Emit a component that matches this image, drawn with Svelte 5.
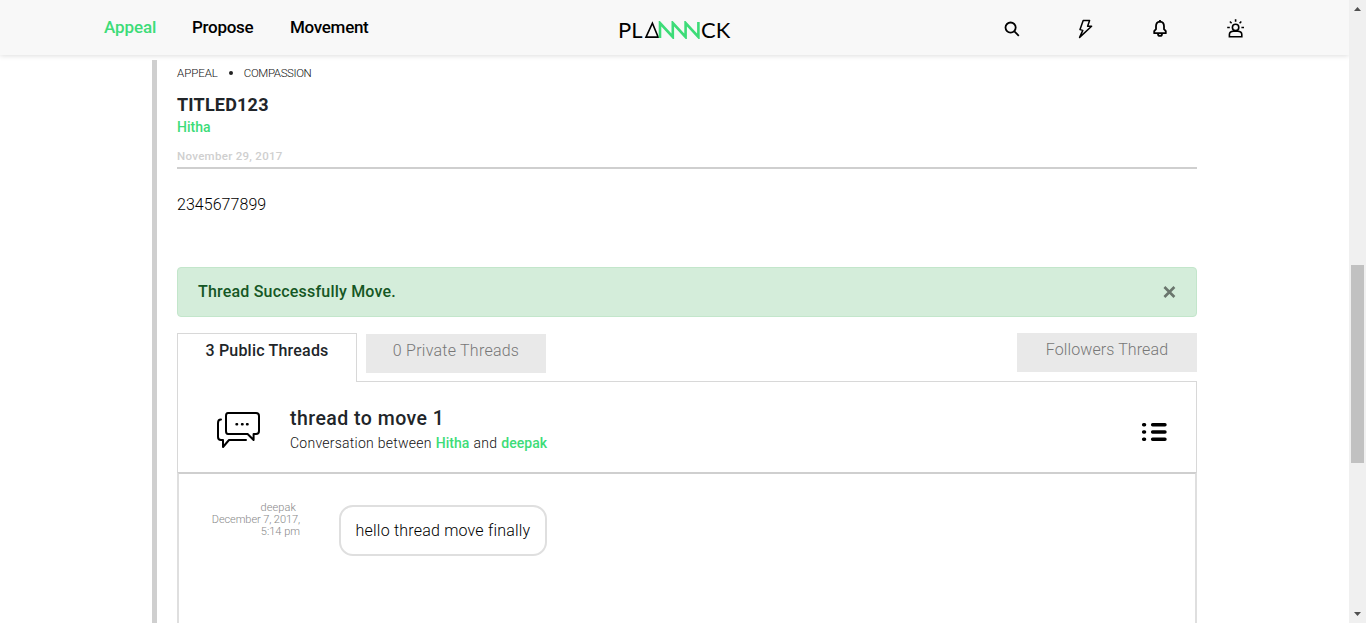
<script>
  const nav = [
    { label: 'Appeal', cls: 'appeal' },
    { label: 'Propose', cls: 'propose' },
    { label: 'Movement', cls: 'movement' }
  ];
</script>

<div class="window">
  <div class="page">
    <header>
      <nav>
        {#each nav as item}
          <a class={item.cls}>{item.label}</a>
        {/each}
      </nav>
      <div class="logo">
        <span class="pl">PL</span>
        <svg width="56" height="18" viewBox="0 0 56 18" fill="none">
          <path d="M2 16.1 8.4 2.2 14.2 16.1Z" stroke="#000" stroke-width="1.6" />
          <path d="M16 17V2L28.8 16V2L41.6 16V2L54.4 16V1" stroke="#3ddc78" stroke-width="2.6" />
        </svg>
        <span class="ck">CK</span>
      </div>
      <div class="icons">
        <svg width="16" height="16" viewBox="0 0 16 16" fill="none" stroke="#000" stroke-width="1.8">
          <circle cx="6.6" cy="6.6" r="5.1" /><path d="M10.4 10.4 14.8 14.8" />
        </svg>
        <svg width="16" height="20" viewBox="0 0 16 20" fill="none" stroke="#000" stroke-width="1.5" stroke-linejoin="round">
          <path d="M5.2 1.4H11.6L9.6 7.2H13.6L1.6 18.4 4.8 11.4 2 10.6Z" />
        </svg>
        <svg class="bell" width="16" height="18" viewBox="0 0 16 18" fill="none" stroke="#000" stroke-width="1.8" stroke-linejoin="round">
          <path d="M8 1.6C5.2 1.8 4 3.8 4 6.2V9.2L2.2 11.2V13.2H13.8V11.2L12 9.2V6.2C12 3.8 10.8 1.8 8 1.6Z" />
          <path d="M6 14C6 16.6 10 16.6 10 14M8 0V2" />
        </svg>
        <svg class="user" width="18" height="20" viewBox="0 0 18 20" fill="none" stroke="#000" stroke-width="1.6">
          <circle cx="8.6" cy="8.4" r="3.2" />
          <path d="M2.4 17.8V15.6C2.4 13.2 4.1 12.3 6.6 12.3H10.6C13.1 12.3 14.8 13.2 14.8 15.6V17.8Z" />
          <path d="M8.6 .2V2.8M2.9 2.5 4.6 4.2M14.3 2.5 12.6 4.2M.2 8.5H2.8M14.4 8.5H17" />
        </svg>
      </div>
    </header>

    <main>
      <div class="crumbs"><span class="c1">APPEAL</span><i></i><span class="c2">COMPASSION</span></div>
      <h1>TITLED123</h1>
      <div class="author">Hitha</div>
      <div class="date">November 29, 2017</div>
      <p class="body">2345677899</p>

      <div class="alert">
        <strong>Thread Successfully Move.</strong>
        <svg width="14" height="14" viewBox="0 0 14 14" stroke="#6a766d" stroke-width="2.6"><path d="M2.4 2 12.4 12M12.4 2 2.4 12" /></svg>
      </div>

      <div class="tabs">
        <div class="tab active">3 Public Threads</div>
        <div class="tab private">0 Private Threads</div>
        <div class="tab followers">Followers Thread</div>
      </div>

      <section class="thread">
        <svg class="chat" width="46" height="38" viewBox="0 0 46 38" fill="none" stroke="#000" stroke-width="2" stroke-linejoin="round" stroke-linecap="round">
          <path d="M12 2H40Q43 2 43 5V20Q43 23 40 23H37.6V29L31.6 23H12Q10 23 10 20V5Q10 2 12 2Z" />
          <path d="M5 8.6Q2 8.6 2 12V26Q2 29 5 29H7V36L13 29H30" />
          <path d="M20.5 13.2H21.1M26 13.2H26.6M31 13.2H31.6" stroke-width="2.4" />
        </svg>
        <div class="info">
          <h2>thread to move 1</h2>
          <div class="between"><span>Conversation between</span><b>Hitha</b><span>and</span><b>deepak</b></div>
        </div>
        <svg class="list" width="26" height="20" viewBox="0 0 26 20" stroke="#000" stroke-width="3.4" stroke-linecap="round">
          <path d="M2.6 2.8H3.6M2.6 10H3.6M2.6 17.2H3.6M11.6 2.8H24M11.6 10H24M11.6 17.2H24" />
        </svg>
      </section>

      <section class="messages">
        <div class="meta">
          <div class="who">deepak</div>
          <div class="when">December 7, 2017,</div>
          <div class="time">5:14 pm</div>
        </div>
        <div class="bubble">hello thread move finally</div>
      </section>
    </main>
  </div>

  <div class="scroll">
    <svg width="7" height="4" viewBox="0 0 7 4"><path d="M0 4 3.5 0 7 4Z" fill="#505050" /></svg>
    <div class="thumb"></div>
    <svg width="7" height="4" viewBox="0 0 7 4"><path d="M0 0 3.5 4 7 0Z" fill="#505050" /></svg>
  </div>
</div>

<style>
  :global(body) { margin: 0; overflow: hidden; background: #fff; }
  * { box-sizing: border-box; }
  .window { display: flex; width: 1366px; height: 623px; overflow: hidden; font-family: Roboto, "Noto Sans", sans-serif; font-weight: 300; color: #111; white-space: nowrap; }
  .page { width: 1349px; display: flex; flex-direction: column; gap: 5px; }
  header { height: 55px; flex: none; display: grid; grid-template-columns: 618px 386px 1fr; background: #f8f8f8; box-shadow: 0 1px 5px rgba(0, 0, 0, .13); }
  nav { display: flex; padding-left: 104px; line-height: 54px; font-size: 17px; font-weight: 500; letter-spacing: -.3px; color: #000; }
  .appeal { width: 88px; letter-spacing: -.1px; color: #3ddc78; }
  .propose { width: 98px; }
  .logo { display: flex; height: 18px; margin-top: 21px; line-height: 18px; font-family: Lato, sans-serif; font-weight: 400; font-size: 22px; color: #000; }
  .pl { width: 26px; }
  .ck { width: 32px; padding-left: 1px; }
  .icons { display: flex; align-items: center; gap: 58px; padding-top: 2px; }
  .bell { margin-top: 1px; }
  .user { margin-left: 1px; }
  main { flex: 1; margin-left: 152px; width: 1045px; border-left: 5px solid #cfcfcf; padding-left: 20px; }
  .crumbs { display: flex; align-items: center; height: 26px; font-size: 11.5px; }
  .crumbs i { width: 4px; height: 4px; border-radius: 50%; background: #222; margin: 0 11px; }
  .c1 { letter-spacing: -.05px; }
  .c2 { letter-spacing: -.38px; }
  h1 { margin: 0; height: 37px; line-height: 38px; font-size: 18px; font-weight: 700; letter-spacing: .2px; color: #212529; }
  .author { height: 10px; line-height: 9px; font-size: 14px; font-weight: 500; color: #3ddc78; }
  .date { height: 36px; line-height: 46px; border-bottom: 2px solid #cfcfcf; font-size: 11.5px; font-weight: 500; letter-spacing: .3px; color: #cfcfcf; }
  .body { margin: 0; height: 98px; line-height: 72px; font-size: 16px; letter-spacing: .05px; color: #000; }
  .alert { display: flex; align-items: center; justify-content: space-between; height: 50px; padding: 0 20px; border: 1px solid #c3e6cb; border-radius: 4px; background: #d4edda; color: #155724; font-size: 16px; }
  .alert strong { font-weight: 500; letter-spacing: .2px; padding-bottom: 2px; }
  .tabs { display: flex; height: 48px; margin-top: 16px; }
  .tab { width: 180px; height: 39px; text-align: center; line-height: 34px; font-size: 16px; background: #e9e9e9; color: #777; }
  .active { height: 48px; background: #fff; border: 1px solid #d8d8d8; border-bottom: 0; color: #212529; font-weight: 500; letter-spacing: .2px; }
  .private { margin: 1px 0 0 9px; letter-spacing: .25px; }
  .followers { margin-left: auto; letter-spacing: .1px; }
  .thread { display: flex; height: 91px; border: solid #d8d8d8; border-width: 0 1px; padding: 28px 29px 0 38px; background: linear-gradient(#d8d8d8, #d8d8d8) 178px 0 / 840px 1px no-repeat; }
  .chat { margin-top: 2px; }
  .info { margin-left: 28px; flex: 1; }
  h2 { margin: 0; height: 23px; line-height: 20px; font-size: 19.5px; font-weight: 500; letter-spacing: .47px; color: #212529; }
  .between { display: flex; gap: 4px; line-height: 23px; font-size: 14px; letter-spacing: .25px; }
  b { font-weight: 500; letter-spacing: .05px; color: #3ddc78; }
  .list { margin-top: 13px; }
  .messages { display: flex; height: 160px; border: 2px solid #dfdfdf; border-top-color: #cfcfcf; padding: 28px 0 0 32px; }
  .meta { width: 89px; font-size: 11px; line-height: 12px; color: #888; text-align: right; }
  .who { padding-right: 4px; letter-spacing: .1px; }
  .when { letter-spacing: -.08px; }
  .bubble { width: 208px; height: 51px; margin: 3px 0 0 39px; border: 2px solid #dfdfdf; border-radius: 14px; line-height: 48px; text-align: center; font-size: 16px; letter-spacing: .2px; color: #000; }
  .scroll { width: 17px; background: #f0f0f0; display: flex; flex-direction: column; align-items: center; padding: 7px 0; }
  .thumb { width: 13px; height: 198px; margin: 254px 0 149px; background: #c1c1c1; }
  .scroll svg { flex: none; }
</style>
